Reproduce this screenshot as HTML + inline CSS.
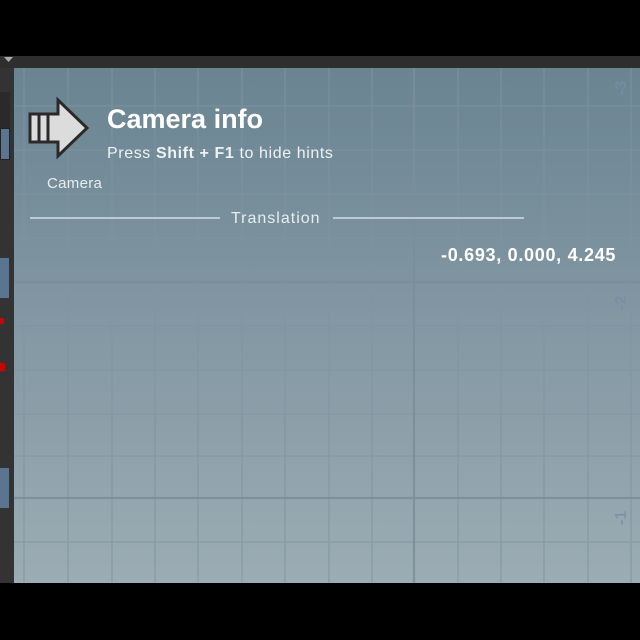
<!DOCTYPE html>
<html><head><style>
*{margin:0;padding:0}
body{width:640px;height:640px;background:#000;position:relative;overflow:hidden;font-family:"Liberation Sans","DejaVu Sans",sans-serif}
.tb{position:absolute;left:0;top:56px;width:640px;height:12px;background:#2e2e2e}
.lp{position:absolute;left:0;top:68px;width:14px;height:515px;background:#333}
.vp{position:absolute;left:14px;top:68px;width:626px;height:515px;background:linear-gradient(#6a8492,#9cacb4);overflow:hidden}
.t{position:absolute;color:#fff;white-space:nowrap}
</style></head><body>
<div class="tb"></div>
<svg style="position:absolute;left:3px;top:56px" width="12" height="8"><path d="M1 1h9l-4.5 5z" fill="#aaa"/></svg>
<div class="lp">
 <div style="position:absolute;left:0;top:24px;width:10px;height:40px;background:#2a2a2a"></div>
 <div style="position:absolute;left:0;top:60px;width:8px;height:30px;background:#5b7590;border:1px solid #222"></div>
 <div style="position:absolute;left:0;top:190px;width:9px;height:40px;background:#5b7590"></div>
 <div style="position:absolute;left:0;top:250px;width:4px;height:6px;background:#c00"></div>
 <div style="position:absolute;left:0;top:295px;width:5px;height:8px;background:#c00"></div>
 <div style="position:absolute;left:0;top:400px;width:9px;height:40px;background:#5b7590"></div>
</div>
<div class="vp">
<svg width="626" height="515" style="position:absolute;left:0;top:0">
<g stroke="#7f95a0" stroke-width="1.5" opacity="0.6">
<line x1="10" y1="0" x2="10" y2="515"/><line x1="54" y1="0" x2="54" y2="515"/><line x1="98" y1="0" x2="98" y2="515"/><line x1="141" y1="0" x2="141" y2="515"/><line x1="184" y1="0" x2="184" y2="515"/><line x1="228" y1="0" x2="228" y2="515"/><line x1="271" y1="0" x2="271" y2="515"/><line x1="315" y1="0" x2="315" y2="515"/><line x1="358" y1="0" x2="358" y2="515"/><line x1="444" y1="0" x2="444" y2="515"/><line x1="487" y1="0" x2="487" y2="515"/><line x1="530" y1="0" x2="530" y2="515"/><line x1="574" y1="0" x2="574" y2="515"/><line x1="617" y1="0" x2="617" y2="515"/>
<line x1="0" y1="38" x2="626" y2="38"/><line x1="0" y1="82" x2="626" y2="82"/><line x1="0" y1="126" x2="626" y2="126"/><line x1="0" y1="170" x2="626" y2="170"/><line x1="0" y1="258" x2="626" y2="258"/><line x1="0" y1="302" x2="626" y2="302"/><line x1="0" y1="346" x2="626" y2="346"/><line x1="0" y1="388" x2="626" y2="388"/><line x1="0" y1="474" x2="626" y2="474"/>
</g>
<g stroke="#7a8f9a" stroke-width="2.2" opacity="0.85">
<line x1="400" y1="0" x2="400" y2="515"/><line x1="0" y1="214" x2="626" y2="214"/><line x1="0" y1="430" x2="626" y2="430"/>
</g>
<g fill="#7b8da4" font-weight="bold" font-size="16" opacity="0.8" font-family="Liberation Sans,sans-serif">
<text transform="translate(612,27) rotate(-90)">-3</text>
<text transform="translate(612,242) rotate(-90)">-2</text>
<text transform="translate(612,457) rotate(-90)">-1</text>
</g>
<g transform="translate(-14,-68)" stroke="#2a2a2a" stroke-width="3" stroke-linejoin="miter">
<path d="M30 114H58V100L87 128L58 156V142H30Z" fill="#dcdcdc"/>
<path d="M39 114V142M48 114V142" fill="none"/>
</g>
<g transform="translate(-14,-68)" stroke="#e6ecef" stroke-width="1.2">
<line x1="30" y1="218" x2="220" y2="218"/><line x1="333" y1="218" x2="524" y2="218"/>
</g>
</svg>
</div>
<div class="t" style="left:107px;top:104px;font-size:27px;font-weight:bold">Camera info</div>
<div class="t" style="left:107px;top:145px;font-size:16px;letter-spacing:0.6px;color:#eef2f4">Press <b>Shift + F1</b> to hide hints</div>
<div class="t" style="left:47px;top:175px;font-size:15px;letter-spacing:0.3px;color:#e8edf0">Camera</div>
<div class="t" style="left:231px;top:210px;font-size:16px;letter-spacing:1px;color:#e8edf0">Translation</div>
<div class="t" style="left:441px;top:245px;font-size:18px;letter-spacing:0.7px;font-weight:bold">-0.693, 0.000, 4.245</div>
</body></html>
